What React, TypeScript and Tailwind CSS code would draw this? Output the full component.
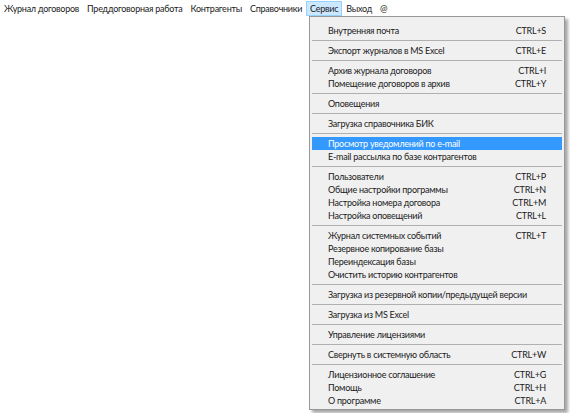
import React from 'react'

type Item = { label: string; shortcut?: string; active?: boolean }

const groups: Item[][] = [
  [{ label: 'Внутренняя почта', shortcut: 'CTRL+S' }],
  [{ label: 'Экспорт журналов в MS Excel', shortcut: 'CTRL+E' }],
  [
    { label: 'Архив журнала договоров', shortcut: 'CTRL+I' },
    { label: 'Помещение договоров в архив', shortcut: 'CTRL+Y' },
  ],
  [{ label: 'Оповещения' }],
  [{ label: 'Загрузка справочника БИК' }],
  [
    { label: 'Просмотр уведомлений по e-mail', active: true },
    { label: 'E-mail рассылка по базе контрагентов' },
  ],
  [
    { label: 'Пользователи', shortcut: 'CTRL+P' },
    { label: 'Общие настройки программы', shortcut: 'CTRL+N' },
    { label: 'Настройка номера договора', shortcut: 'CTRL+M' },
    { label: 'Настройка оповещений', shortcut: 'CTRL+L' },
  ],
  [
    { label: 'Журнал системных событий', shortcut: 'CTRL+T' },
    { label: 'Резервное копирование базы' },
    { label: 'Переиндексация базы' },
    { label: 'Очистить историю контрагентов' },
  ],
  [{ label: 'Загрузка из резервной копии/предыдущей версии' }],
  [{ label: 'Загрузка из MS Excel' }],
  [{ label: 'Управление лицензиями' }],
  [{ label: 'Свернуть в системную область', shortcut: 'CTRL+W' }],
  [
    { label: 'Лицензионное соглашение', shortcut: 'CTRL+G' },
    { label: 'Помощь', shortcut: 'CTRL+H' },
    { label: 'О программе', shortcut: 'CTRL+A' },
  ],
]

const topMenu = ['Журнал договоров', 'Преддоговорная работа', 'Контрагенты', 'Справочники', 'Сервис', 'Выход', '@']

const MenuRow: React.FC<{ item: Item }> = ({ item }) => (
  <div
    className={
      'mx-[2px] flex h-[13px] items-center justify-between whitespace-nowrap pl-[16px] pr-[16px] ' +
      (item.active ? 'bg-[#3399ff] text-white' : 'text-[#1a1a1a]')
    }
  >
    <span>{item.label}</span>
    {item.shortcut && <span>{item.shortcut}</span>}
  </div>
)

export default function App() {
  return (
    <div
      className="relative h-[413px] w-[570px] overflow-hidden bg-white text-[9px] leading-none tracking-[-0.25px]"
      style={{ fontFamily: 'Lato, "Liberation Sans", sans-serif' }}
    >
      <div className="flex h-[17px] items-center text-[#1a1a1a]">
        {topMenu.map((m) => (
          <div
            key={m}
            className={
              'flex h-[15px] items-center whitespace-nowrap border px-[3px] ' +
              (m === 'Сервис' ? 'border-[#99d1ff] bg-[#cce8ff]' : 'border-transparent')
            }
          >
            {m}
          </div>
        ))}
      </div>

      <div className="absolute left-[309px] top-[16px] w-[256px] border border-[#979797] bg-[#f0f0f0] pt-[7px] pb-[2px] shadow-[3px_3px_3px_rgba(0,0,0,0.35)]">
        {groups.map((g, gi) => (
          <div key={gi}>
            {gi > 0 && (
              <div className="flex h-[7px] items-center px-[2px]">
                <div className="h-[1px] w-full bg-[#b0b0b0]" />
              </div>
            )}
            {g.map((it) => (
              <MenuRow key={it.label} item={it} />
            ))}
          </div>
        ))}
      </div>
    </div>
  )
}
